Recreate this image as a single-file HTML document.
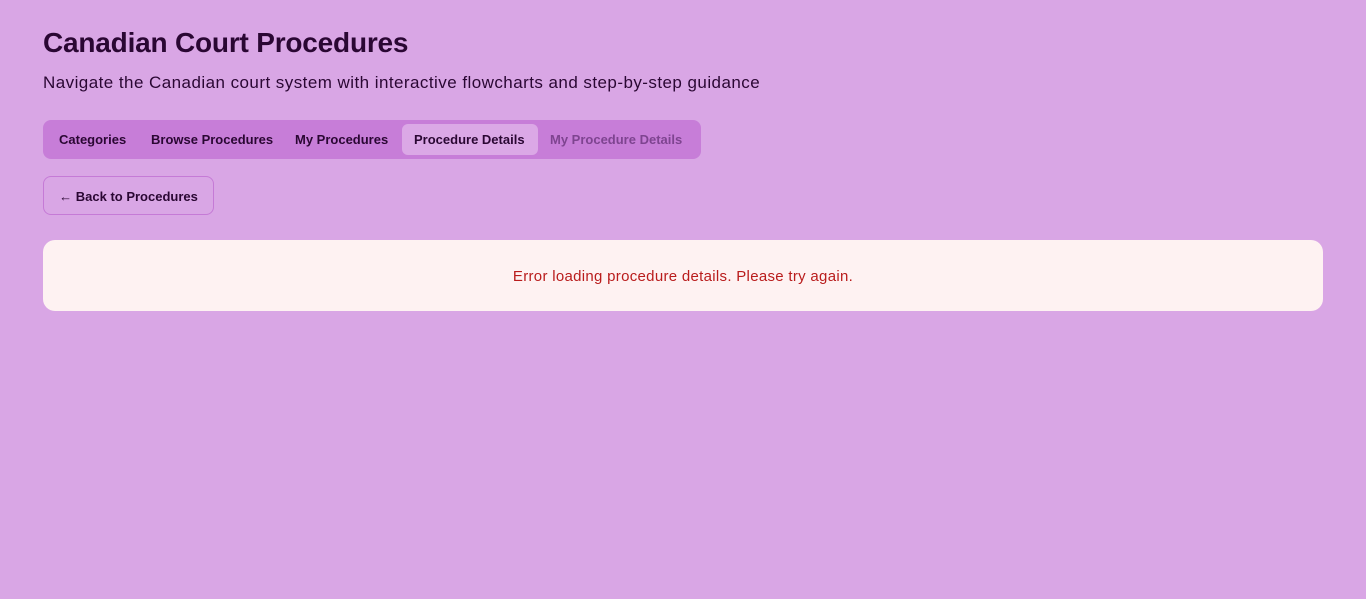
<!DOCTYPE html>
<html><head><style>
body{margin:0;background:#d9a6e5;font-family:"Liberation Sans",sans-serif;color:#2a0733;width:1366px;height:599px;overflow:hidden}
.w{position:absolute;left:43px;top:0;right:43px}
h1{position:absolute;top:27px;left:0;margin:0;font-size:28px;font-weight:bold;letter-spacing:-0.2px;white-space:nowrap}
p.s{position:absolute;top:73px;left:0;margin:0;font-size:17px;letter-spacing:0.45px;white-space:nowrap}
.nav{position:absolute;top:120px;left:0;width:658px;height:39px;background:#c77dd8;border-radius:8px}
.t{position:absolute;top:4px;height:31px;line-height:32px;font-size:13px;font-weight:bold;white-space:nowrap;padding:0 12px;border-radius:6px}
.a{background:#dba8e6}
.back{position:absolute;top:176px;left:0;width:169px;height:37px;border:1px solid #c57ad6;border-radius:8px;font-size:13px;font-weight:bold;line-height:39px;text-align:center}
.err{position:absolute;top:240px;left:0;right:0;height:71px;background:#fef2f2;border-radius:12px;color:#b91c1c;font-size:15px;letter-spacing:0.3px;text-align:center;line-height:73px}
</style></head><body><div class="w">
<h1>Canadian Court Procedures</h1>
<p class="s">Navigate the Canadian court system with interactive flowcharts and step-by-step guidance</p>
<div class="nav">
<span class="t" style="left:4px">Categories</span>
<span class="t" style="left:96px">Browse Procedures</span>
<span class="t" style="left:240px">My Procedures</span>
<span class="t a" style="left:359px;width:112px">Procedure Details</span>
<span class="t" style="left:495px;color:#7e4490">My Procedure Details</span>
</div>
<div class="back">← Back to Procedures</div>
<div class="err">Error loading procedure details. Please try again.</div>
</div></body></html>
